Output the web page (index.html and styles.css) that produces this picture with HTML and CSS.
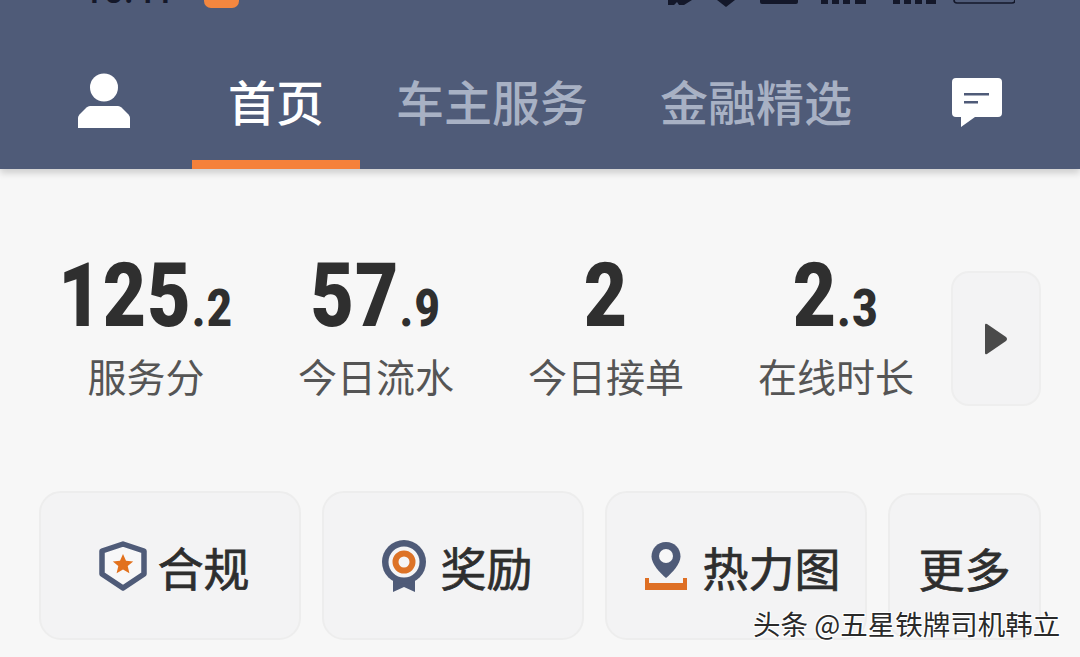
FILE: index.html
```html
<!DOCTYPE html>
<html lang="zh-CN">
<head>
<meta charset="utf-8">
<title>首页</title>
<link rel="stylesheet" href="styles.css">
</head>
<body>
<div class="page">
  <header class="header">
    <div class="status">
      <span class="time">10:41</span>
      <span class="badge"></span>
      <svg class="status-icons" width="350" height="8" viewBox="0 0 350 8">
        <path d="M3 0h24l-8 5h-5l-2-3-3 3H3z" fill="#14182a"/>
        <path d="M52 0h18l-9 7z" fill="#14182a"/>
        <path d="M95 0h38v2q0 2-2 2H97q-2 0-2-2z" fill="#14182a"/>
        <path d="M156 0h7v4h-7zM167 0h7v4h-7zM178 0h7v4h-7zM190 0h11v4h-11z" fill="#14182a"/>
        <path d="M228 0h7v4h-7zM239 0h7v4h-7zM250 0h7v4h-7zM261 0h10v4h-10z" fill="#14182a"/>
        <path d="M289 0v0q0 3 3 3h55q3 0 3-3" fill="none" stroke="#14182a" stroke-width="1.6"/>
      </svg>
    </div>
    <nav class="nav">
      <svg class="user-icon" width="52" height="55" viewBox="0 0 52 55">
        <circle cx="26" cy="14.500" r="14" fill="#fff"/>
        <path d="M0 55V45q0-2 1.500-3.500l7-7q1.500-1.500 3.500-1.500h28q2 0 3.500 1.500l7 7Q52 43 52 45v10z" fill="#fff"/>
      </svg>
      <a class="tab tab-active">首页</a>
      <a class="tab">车主服务</a>
      <a class="tab">金融精选</a>
      <svg class="msg-icon" width="50" height="50" viewBox="0 0 50 50">
        <path d="M4 0h42q4 0 4 4v31q0 4-4 4H23L9 49V39H4q-4 0-4-4V4q0-4 4-4z" fill="#fff"/>
        <rect x="12" y="15" width="25" height="2.500" fill="#4f5b78"/>
        <rect x="12" y="23" width="14" height="2.500" fill="#4f5b78"/>
      </svg>
    </nav>
  </header>

  <main class="main">
    <section class="stats">
      <div class="stat">
        <div class="value"><span class="big">125</span><span class="small">.2</span></div>
        <div class="label">服务分</div>
      </div>
      <div class="stat">
        <div class="value"><span class="big">57</span><span class="small">.9</span></div>
        <div class="label">今日流水</div>
      </div>
      <div class="stat">
        <div class="value"><span class="big">2</span></div>
        <div class="label">今日接单</div>
      </div>
      <div class="stat">
        <div class="value"><span class="big">2</span><span class="small">.3</span></div>
        <div class="label">在线时长</div>
      </div>
      <div class="next">
        <svg width="24" height="32" viewBox="0 0 24 32"><path d="M1 2q0-2 2-1l19 13q2 2 0 4L3 31q-2 1-2-1z" fill="#4a4a4a"/></svg>
      </div>
    </section>

    <section class="cards">
      <div class="card">
        <svg class="card-icon icon-shield" width="48" height="50" viewBox="0 0 48 50">
          <path d="M24 3l21 7v23L24 47 3 33V10z" fill="#f7f7f8" stroke="#4f5b78" stroke-width="5.500" stroke-linejoin="round"/>
          <path d="M24 13l3 6.800 7.200.6-5.500 4.700 1.700 7.200-6.400-3.800-6.400 3.800 1.700-7.200-5.500-4.700 7.200-.6z" fill="#e2711d"/>
        </svg>
        <span>合规</span>
      </div>
      <div class="card">
        <svg class="card-icon" width="44" height="52" viewBox="0 0 44 52">
          <path d="M11 36h22v16l-11-5-11 5z" fill="#4f5b78"/>
          <circle cx="22" cy="22" r="22" fill="#4f5b78"/>
          <circle cx="22" cy="22" r="15.500" fill="#f5f5f6"/>
          <circle cx="22" cy="22" r="8.500" fill="none" stroke="#dd7327" stroke-width="6"/>
        </svg>
        <span>奖励</span>
      </div>
      <div class="card card-heat">
        <svg class="card-icon" width="42" height="48" viewBox="0 0 42 48">
          <path d="M21 0C12 0 6.500 7 6.500 14.500 6.500 22 15 31 21 36 27 31 35.500 22 35.500 14.500 35.500 7 30 0 21 0z" fill="#4f5b78"/>
          <circle cx="21" cy="14" r="7" fill="#f7f7f8"/>
          <path d="M0 36h4v5h34v-5h4v12H0z" fill="#de6f24"/>
        </svg>
        <span>热力图</span>
      </div>
      <div class="card card-more"><span>更多</span></div>
    </section>
  </main>

  <div class="watermark">头条 @五星铁牌司机韩立</div>
</div>
</body>
</html>
```
FILE: styles.css
```css
* { box-sizing: border-box; }
html, body { margin: 0; padding: 0; }
body {
  width: 1080px;
  height: 657px;
  overflow: hidden;
  background: #f7f7f7;
  font-family: "Noto Sans CJK SC", "Noto Sans", sans-serif;
}
.page { position: relative; width: 1080px; height: 657px; overflow: hidden; }

.header {
  height: 169px;
  background: #4f5b78;
  box-shadow: 0 4px 7px rgba(0, 0, 0, .17);
  position: relative;
}
.status {
  height: 8px;
  overflow: hidden;
  display: flex;
  align-items: flex-end;
  padding-left: 83px;
}
.time {
  font-family: "Roboto", sans-serif;
  font-weight: 500;
  font-size: 36px;
  line-height: 36px;
  width: 121px;
  margin-bottom: -1px;
  color: #14182a;
  flex: none;
}
.badge {
  width: 35px;
  height: 15px;
  border-radius: 0 0 7px 7px;
  background: #f4873f;
  flex: none;
}
.status-icons { margin-left: 426px; flex: none; align-self: flex-start; }

.nav {
  height: 161px;
  display: flex;
  align-items: stretch;
  padding-left: 78px;
}
.user-icon { margin: 65px 62px 0 0; flex: none; }
.tab {
  padding: 68px 36px 0;
  font-size: 48px;
  line-height: 48px;
  color: #a8b1c4;
  font-weight: 500;
  white-space: nowrap;
  flex: none;
}
.tab-active {
  color: #fff;
  box-shadow: inset 0 -9px 0 #f5813a;
}
.msg-icon { margin: 70px 0 0 64px; flex: none; }

.main { padding-left: 31px; }
.stats {
  display: flex;
  align-items: flex-start;
  padding-top: 77px;
  height: 322px;
}
.stat { width: 230px; text-align: center; flex: none; }
.value {
  height: 100px;
  line-height: 100px;
  color: #2f2f2f;
  font-family: "Roboto", sans-serif;
  font-weight: 900;
  white-space: nowrap;
  display: flex;
  justify-content: center;
  align-items: baseline;
  transform: scaleX(.84);
}
.big { font-size: 89px; letter-spacing: 1.500px; }
.small { font-size: 52px; letter-spacing: 2px; }
.label {
  font-size: 39px;
  line-height: 50px;
  color: #555;
  margin-top: 4px;
}
.next {
  width: 90px;
  height: 135px;
  margin-top: 25px;
  border-radius: 18px;
  background: #f3f3f4;
  border: 2px solid #eeeeee;
  display: flex;
  align-items: center;
  justify-content: center;
  flex: none;
}

.cards {
  display: flex;
  gap: 21px;
  padding-left: 8px;
}
.card {
  width: 262px;
  height: 149px;
  padding-left: 8px;
  border-radius: 22px;
  background: #f3f3f4;
  border: 2px solid #ededed;
  display: flex;
  align-items: center;
  justify-content: center;
  gap: 15px;
  font-size: 46px;
  font-weight: 400;
  -webkit-text-stroke: .7px #2e2e2e;
  line-height: 60px;
  color: #2e2e2e;
  flex: none;
}
.icon-shield { margin-right: -4px; }
.card-heat { padding-left: 13px; gap: 16px; }
.card-more { width: 153px; margin-top: 2px; height: 147px; padding-left: 0; }

.watermark {
  position: absolute;
  left: 753px;
  top: 605px;
  font-size: 27.500px;
  line-height: 36px;
  color: #2a2a2a;
  white-space: nowrap;
  text-shadow: 1px 1px 0 #fff, -1px -1px 0 #fff, 1px -1px 0 #fff, -1px 1px 0 #fff;
}
```
